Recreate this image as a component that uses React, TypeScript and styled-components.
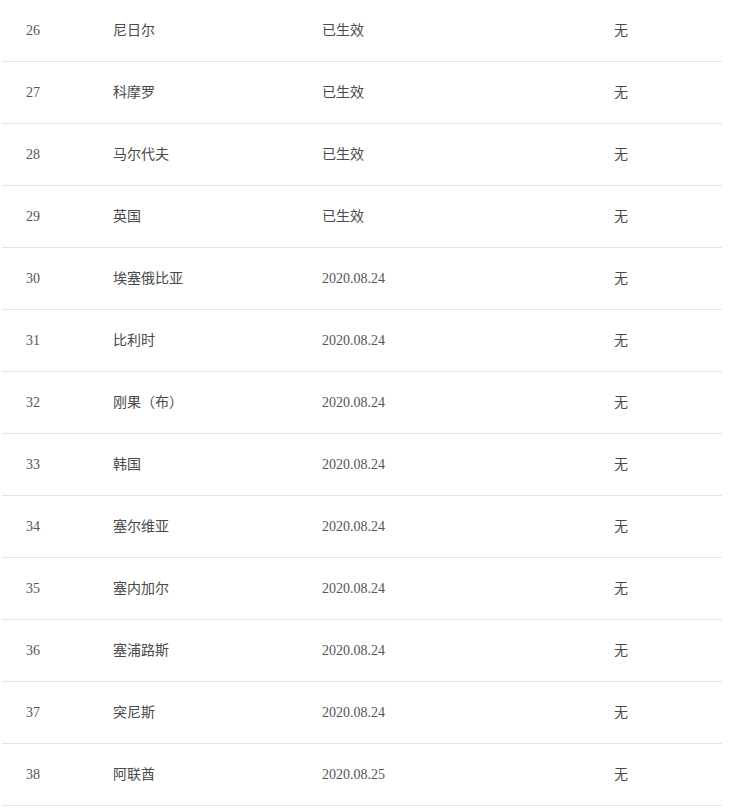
import React from "react";
import styled, { createGlobalStyle } from "styled-components";

const Global = createGlobalStyle`
  html, body { margin: 0; padding: 0; background: #ffffff; }
  body { overflow: hidden; }
`;

const Table = styled.div`
  width: 720px;
  margin-left: 2px;
  display: flex;
  flex-direction: column;
`;

const Row = styled.div`
  display: grid;
  grid-template-columns: 87px 209px 292px 1fr;
  align-items: center;
  height: 61px;
  padding-left: 24px;
  border-bottom: 1px solid #e4e4e4;
`;

const Cell = styled.div<{ $serif?: boolean }>`
  font-family: ${(p) =>
    p.$serif
      ? '"Liberation Serif", "Noto Sans CJK SC", serif'
      : '"Noto Sans CJK SC", "Noto Sans", sans-serif'};
  font-size: 14px;
  line-height: 20px;
  color: ${(p) => (p.$serif ? "#555555" : "#4a4a4a")};
  margin-bottom: ${(p) => (p.$serif ? "0" : "4px")};
  white-space: nowrap;
`;

const rows: [number, string, string][] = [
  [26, "尼日尔", "已生效"],
  [27, "科摩罗", "已生效"],
  [28, "马尔代夫", "已生效"],
  [29, "英国", "已生效"],
  [30, "埃塞俄比亚", "2020.08.24"],
  [31, "比利时", "2020.08.24"],
  [32, "刚果（布）", "2020.08.24"],
  [33, "韩国", "2020.08.24"],
  [34, "塞尔维亚", "2020.08.24"],
  [35, "塞内加尔", "2020.08.24"],
  [36, "塞浦路斯", "2020.08.24"],
  [37, "突尼斯", "2020.08.24"],
  [38, "阿联酋", "2020.08.25"],
];

export default function App() {
  return (
    <>
      <Global />
      <Table>
        {rows.map(([n, name, status]) => (
          <Row key={n}>
            <Cell $serif>{n}</Cell>
            <Cell>{name}</Cell>
            <Cell $serif={/^\d/.test(status)}>{status}</Cell>
            <Cell>无</Cell>
          </Row>
        ))}
      </Table>
    </>
  );
}
